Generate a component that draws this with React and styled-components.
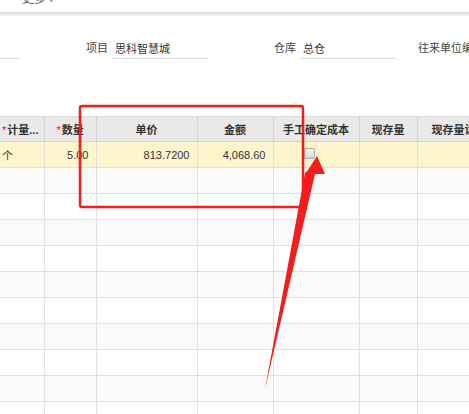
import React from "react";
import styled, { createGlobalStyle } from "styled-components";

const GlobalStyle = createGlobalStyle`
  html, body {
    margin: 0;
    padding: 0;
    background: #fff;
  }
  body {
    font-family: "Liberation Sans", "Noto Sans CJK SC", sans-serif;
    font-size: 11px;
    color: #333;
  }
`;

const Page = styled.div`
  position: relative;
  width: 469px;
  height: 414px;
  overflow: hidden;
  background: #fff;
`;

const TopBar = styled.div`
  height: 12px;
  overflow: hidden;
  padding-left: 22px;
`;

const MoreText = styled.div`
  line-height: 12px;
  font-size: 12px;
  color: #555;
  transform: translateY(-7px);
`;

const Caret = styled.span`
  font-size: 8px;
  margin-left: 3px;
`;

const Shadow = styled.div`
  height: 4px;
  background: linear-gradient(#d9d9d9, #f2f2f2);
`;

const FormRow = styled.div`
  display: flex;
  align-items: flex-end;
  height: 43px;
  margin-bottom: 57px;
  white-space: nowrap;
`;

const Label = styled.div`
  width: ${(p) => p.w}px;
  flex-shrink: 0;
  text-align: ${(p) => (p.left ? "left" : "right")};
  padding: ${(p) => (p.left ? "0 0 0 21px" : "0 4px 0 0")};
  box-sizing: border-box;
  line-height: 20px;
  margin-bottom: 1px;
  color: #444;
`;

const Input = styled.div`
  width: ${(p) => p.w}px;
  flex-shrink: 0;
  height: 20px;
  line-height: 20px;
  padding-left: 3px;
  box-sizing: border-box;
  border-bottom: 1px solid #dcdcdc;
  color: #333;
`;

const TableWrap = styled.div`
  width: 469px;
  overflow: hidden;
`;

const Grid = styled.table`
  width: 517px;
  table-layout: fixed;
  border-collapse: collapse;
`;

const HeadCell = styled.th`
  height: 24px;
  padding: 0 ${(p) => (p.left ? "2px" : "4px")};
  background: #e9e9e9;
  border: 1px solid #d4d4d4;
  border-top: 1px solid #dcdcdc;
  font-weight: bold;
  font-size: 11px;
  color: #333;
  text-align: ${(p) => (p.left ? "left" : "center")};
  white-space: nowrap;
  overflow: hidden;
  &:first-child {
    border-left: none;
  }
`;

const Star = styled.span`
  color: #e8003c;
  font-weight: normal;
  margin-right: 1px;
`;

const Row = styled.tr`
  background: ${(p) => (p.active ? "#fff5cc" : p.odd ? "#fafafa" : "#fff")};
`;

const Cell = styled.td`
  height: 25px;
  padding: 0 ${(p) => (p.right ? "7px" : "2px")};
  border: 1px solid #e0e0e0;
  text-align: ${(p) => (p.right ? "right" : "left")};
  white-space: nowrap;
  overflow: hidden;
  &:first-child {
    border-left: none;
  }
`;

const CheckBox = styled.span`
  display: inline-block;
  width: 9px;
  height: 9px;
  margin: 0 0 0 28px;
  border: 1px solid #a9a9a9;
  border-radius: 2px;
  background: linear-gradient(#f4f4f4, #d8d8d8);
  vertical-align: middle;
  position: relative;
  top: -2px;
`;

const Overlay = styled.svg`
  position: absolute;
  left: 0;
  top: 0;
  pointer-events: none;
`;

const columns = [44, 52, 101, 76, 86, 58, 100];

export default function App() {
  const emptyRows = Array.from({ length: 10 }, (_, i) => i);

  return (
    <Page>
      <GlobalStyle />
      <TopBar>
        <MoreText>
          更多<Caret>˅</Caret>
        </MoreText>
      </TopBar>
      <Shadow />

      <FormRow>
        <Input w={20} />
        <Label w={92}>项目</Label>
        <Input w={96}>思科智慧城</Input>
        <Label w={92}>仓库</Label>
        <Input w={97}>总仓</Input>
        <Label w={90} left>往来单位编码</Label>
      </FormRow>

      <TableWrap>
        <Grid>
          <colgroup>
            {columns.map((w, i) => (
              <col key={i} style={{ width: w }} />
            ))}
          </colgroup>
          <thead>
            <tr>
              <HeadCell left>
                <Star>*</Star>计量...
              </HeadCell>
              <HeadCell left style={{ paddingLeft: 12 }}>
                <Star>*</Star>数量
              </HeadCell>
              <HeadCell>单价</HeadCell>
              <HeadCell>金额</HeadCell>
              <HeadCell>手工确定成本</HeadCell>
              <HeadCell>现存量</HeadCell>
              <HeadCell left style={{ paddingLeft: 14 }}>现存量设置</HeadCell>
            </tr>
          </thead>
          <tbody>
            <Row active>
              <Cell>个</Cell>
              <Cell right>5.00</Cell>
              <Cell right>813.7200</Cell>
              <Cell right>4,068.60</Cell>
              <Cell>
                <CheckBox />
              </Cell>
              <Cell />
              <Cell />
            </Row>
            {emptyRows.map((i) => (
              <Row key={i} odd={i % 2 === 0}>
                {columns.map((_, c) => (
                  <Cell key={c} />
                ))}
              </Row>
            ))}
          </tbody>
        </Grid>
      </TableWrap>

      <Overlay width="469" height="414" viewBox="0 0 469 414">
        <rect
          x="80"
          y="106"
          width="223"
          height="101"
          rx="2"
          fill="none"
          stroke="#f41c1c"
          strokeWidth="2.5"
        />
        <polygon
          points="317,156 325,174 315,174 265,389 305,173 308,170"
          fill="#f41c1c"
        />
      </Overlay>
    </Page>
  );
}
